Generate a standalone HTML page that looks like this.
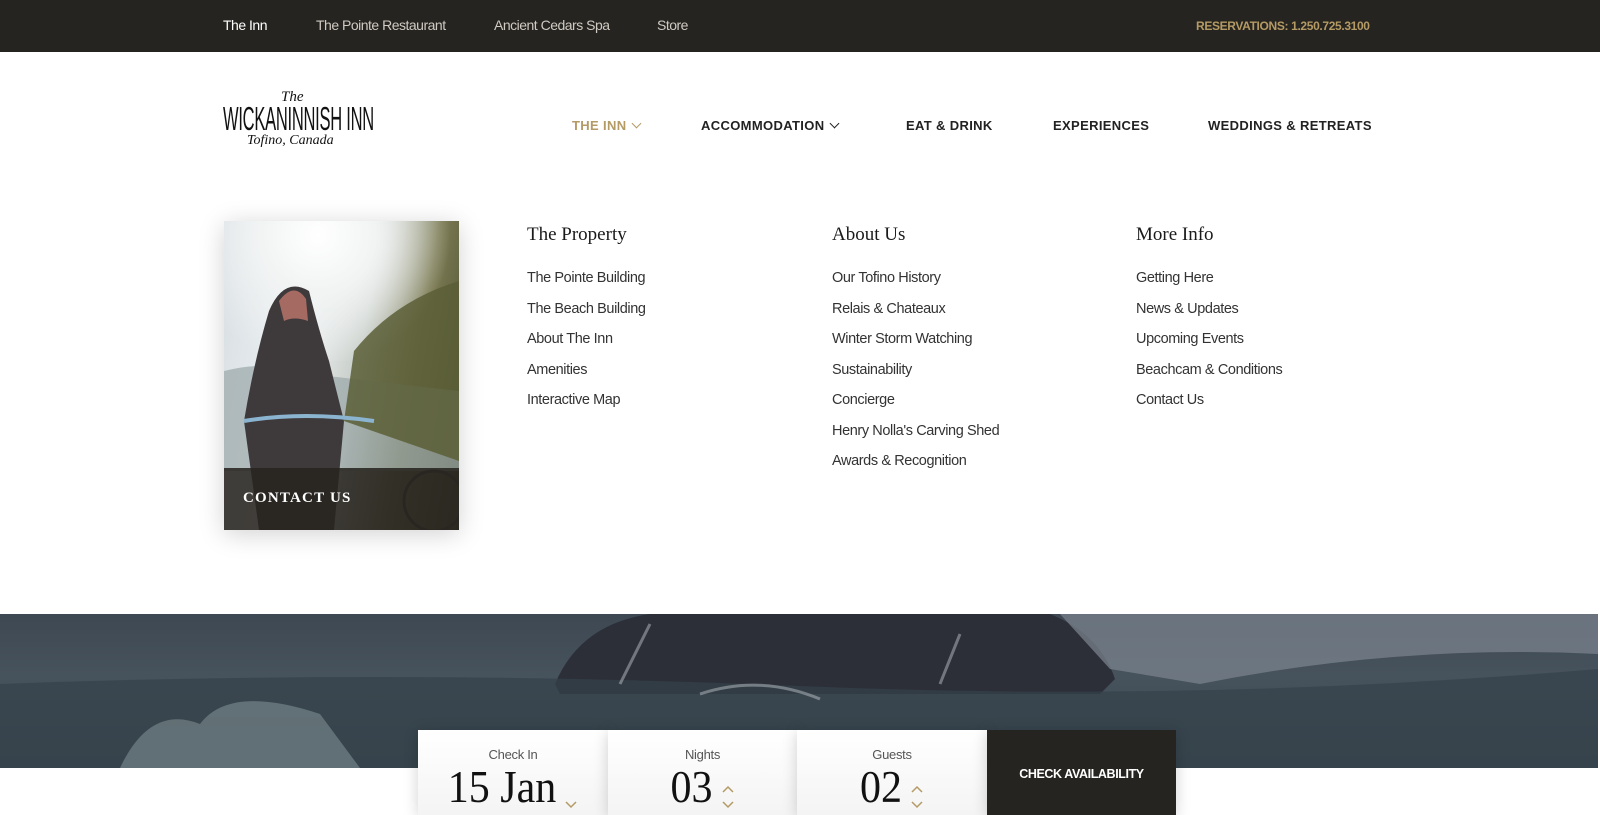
<!DOCTYPE html>
<html><head><meta charset="utf-8"><style>
*{margin:0;padding:0;box-sizing:border-box}
body{width:1600px;height:815px;overflow:hidden;background:#fff;font-family:"Liberation Sans",sans-serif;position:relative}
.top{position:absolute;left:0;top:0;width:1600px;height:52px;background:#262420}
.top a{position:absolute;top:17px;font-size:14px;color:#cfcac2;letter-spacing:-0.5px;white-space:nowrap}
.top .res{color:#b49a64;font-weight:bold;font-size:12px;top:19px;letter-spacing:-0.35px}
.logo{position:absolute;left:223px;top:90px;width:150px;color:#111;white-space:nowrap}
.logo .t{font-family:"Liberation Serif",serif;font-style:italic;font-size:15px;line-height:14px;margin-left:58px}
.logo .w{font-family:"Liberation Sans Narrow","Liberation Sans",sans-serif;font-size:33px;line-height:30px;transform:scaleX(.5);transform-origin:left;letter-spacing:-0.5px;white-space:nowrap}
.logo .c{font-family:"Liberation Serif",serif;font-style:italic;font-size:14px;line-height:14px;margin-left:24px}
.nav{position:absolute;top:118px;font-size:13px;font-weight:bold;letter-spacing:0.35px;color:#222;white-space:nowrap}
.nav.g{color:#b49a64}
.chev{display:inline-block;width:7px;height:7px;border-right:1.6px solid currentColor;border-bottom:1.6px solid currentColor;transform:rotate(45deg);margin-left:7px;position:relative;top:-3px}
.card{position:absolute;left:224px;top:221px;width:235px;height:309px;box-shadow:0 4px 24px rgba(0,0,0,.18);overflow:hidden;
background:linear-gradient(100deg,#d6dde2 0%,#eef2f3 35%,#c7cdc8 55%,#7d7c55 75%,#3f4528 100%)}
.sky{position:absolute;left:0;top:0;width:235px;height:140px;background:radial-gradient(circle at 40% 10%,#fff 0,#f2f4f4 30%,rgba(220,228,232,0) 70%)}
.over{position:absolute;left:0;top:247px;width:235px;height:62px;background:rgba(40,36,32,.88);color:#fff;font-family:"Liberation Serif",serif;font-size:15px;font-weight:bold;letter-spacing:1.2px;padding:22px 0 0 19px}
.col{position:absolute;top:224px}
.col h3{font-family:"Liberation Serif",serif;font-weight:normal;font-size:19px;color:#1a1a1a;margin-bottom:17px}
.col a{display:block;font-size:14.5px;color:#333;line-height:30.5px;letter-spacing:-0.4px;white-space:nowrap}
.hero{position:absolute;left:0;top:614px;width:1598px;height:154px;background:linear-gradient(180deg,#3e4853 0%,#46525c 40%,#3a4850 100%)}
.bk{position:absolute;top:730px;height:85px;background:linear-gradient(#fff,#f4f4f4);box-shadow:0 2px 14px rgba(0,0,0,.18);text-align:center}
.bk .l{font-size:13px;color:#555;margin-top:17px;letter-spacing:-0.3px}
.bk .v{font-family:"Liberation Serif",serif;font-size:42px;color:#111;line-height:44px;margin-top:4px;display:inline-block;transform:scaleY(1.08)}
.arr{display:inline-block;vertical-align:middle;margin-left:8px}
</style></head><body>
<div class="top">
<a style="left:223px;color:#fff">The Inn</a>
<a style="left:316px">The Pointe Restaurant</a>
<a style="left:494px">Ancient Cedars Spa</a>
<a style="left:657px">Store</a>
<a class="res" style="left:1196px">RESERVATIONS: 1.250.725.3100</a>
</div>
<div class="logo"><div class="t">The</div><div class="w">WICKANINNISH INN</div><div class="c">Tofino, Canada</div></div>
<div class="nav g" style="left:572px">THE INN<span class="chev"></span></div>
<div class="nav" style="left:701px">ACCOMMODATION<span class="chev"></span></div>
<div class="nav" style="left:906px">EAT &amp; DRINK</div>
<div class="nav" style="left:1053px">EXPERIENCES</div>
<div class="nav" style="left:1208px">WEDDINGS &amp; RETREATS</div>

<div class="card"><div class="sky"></div>
<svg width="235" height="309" style="position:absolute;left:0;top:0">
<path d="M0 150 Q40 140 60 150 L235 170 L235 250 L0 250Z" fill="#9aa6a8" opacity=".7"/>
<path d="M130 130 Q170 80 235 60 L235 240 L120 200Z" fill="#5b5e36" opacity=".85"/>
<path d="M45 90 Q60 55 85 70 Q95 110 105 140 L120 200 L110 309 L35 309 L20 200 Q30 140 45 90Z" fill="#3e3a3c"/>
<path d="M55 80 Q70 60 82 78 L84 100 Q70 95 60 100Z" fill="#a56a62"/>
<path d="M20 200 Q80 190 150 200" stroke="#8bb4d0" stroke-width="4" fill="none"/>
<circle cx="210" cy="280" r="30" stroke="#333" stroke-width="3" fill="none"/>
</svg>
<div class="over">CONTACT US</div></div>

<div class="col" style="left:527px"><h3>The Property</h3>
<a>The Pointe Building</a><a>The Beach Building</a><a>About The Inn</a><a>Amenities</a><a>Interactive Map</a></div>
<div class="col" style="left:832px"><h3>About Us</h3>
<a>Our Tofino History</a><a>Relais &amp; Chateaux</a><a>Winter Storm Watching</a><a>Sustainability</a><a>Concierge</a><a>Henry Nolla's Carving Shed</a><a>Awards &amp; Recognition</a></div>
<div class="col" style="left:1136px"><h3>More Info</h3>
<a>Getting Here</a><a>News &amp; Updates</a><a>Upcoming Events</a><a>Beachcam &amp; Conditions</a><a>Contact Us</a></div>

<div class="hero">
<svg width="1598" height="154">
<path d="M555 70 Q580 10 650 0 L1050 0 Q1100 20 1115 65 L1100 80 L560 80Z" fill="#2c2f38"/>
<path d="M1060 0 L1598 0 L1598 40 Q1400 30 1200 70 L1110 55Z" fill="#7d8690" opacity=".7"/>
<path d="M0 70 Q400 55 800 72 T1598 55 L1598 154 L0 154Z" fill="#34424a" opacity=".7"/>
<path d="M120 154 Q150 90 200 110 Q230 70 320 100 L360 154Z" fill="#8c9ba0" opacity=".5"/>
<path d="M620 70 L650 10 M940 70 L960 20 M700 80 Q760 60 820 85" stroke="#c9cfd4" stroke-width="3" opacity=".45" fill="none"/>
</svg></div>

<div class="bk" style="left:418px;width:190px"><div class="l">Check In</div><div class="v">15 Jan</div><svg class="arr" width="14" height="10" style="margin-top:14px"><path d="M2 3 L7 8 L12 3" stroke="#b49a64" stroke-width="1.5" fill="none"/></svg></div>
<div class="bk" style="left:608px;width:189px"><div class="l">Nights</div><div class="v">03</div><svg class="arr" width="14" height="26"><path d="M2 8 L7 3 L12 8 M2 18 L7 23 L12 18" stroke="#b49a64" stroke-width="1.5" fill="none"/></svg></div>
<div class="bk" style="left:797px;width:190px"><div class="l">Guests</div><div class="v">02</div><svg class="arr" width="14" height="26"><path d="M2 8 L7 3 L12 8 M2 18 L7 23 L12 18" stroke="#b49a64" stroke-width="1.5" fill="none"/></svg></div>
<div class="bk" style="left:987px;width:189px;background:#262420"><div style="color:#fff;font-weight:bold;font-size:12.5px;margin-top:37px;letter-spacing:-0.4px">CHECK AVAILABILITY</div></div>
</body></html>
